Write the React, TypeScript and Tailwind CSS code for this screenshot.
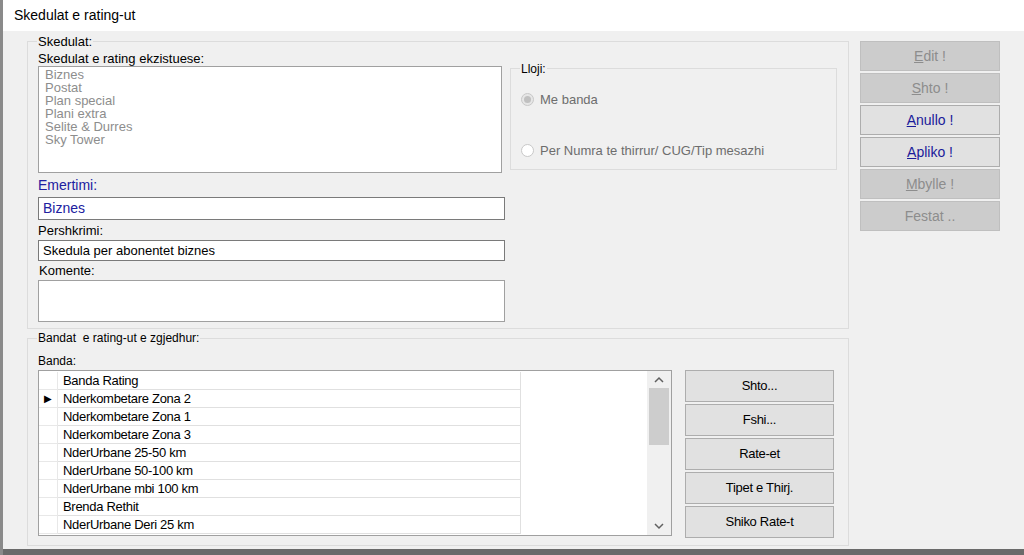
import { FC } from "react";

const schedules = ["Biznes", "Postat", "Plan special", "Plani extra", "Selite & Durres", "Sky Tower"];
const bands = [
    "Nderkombetare Zona 2",
    "Nderkombetare Zona 1",
    "Nderkombetare Zona 3",
    "NderUrbane 25-50 km",
    "NderUrbane 50-100 km",
    "NderUrbane mbi 100 km",
    "Brenda Rethit",
    "NderUrbane Deri 25 km",
];

// top right action buttons: [first letter, rest, enabled]
const actions: [string, string, boolean][] = [
    ["E", "dit !", false],
    ["S", "hto !", false],
    ["A", "nullo !", true],
    ["A", "pliko !", true],
    ["M", "bylle !", false],
    ["", "Festat ..", false],
];

const ActionBtn: FC<{ u: string; rest: string; on: boolean }> = ({ u, rest, on }) => (
    <div
        className={`h-[30px] flex items-center justify-center text-[14px] border ${
            on ? "bg-[#e1e1e1] border-[#adadad] text-[#1a1a9a]" : "bg-[#cccccc] border-[#bfbfbf] text-[#8d8d8d]"
        }`}
    >
        <span className="underline">{u}</span>
        {rest}
    </div>
);

const App: FC = () => {
    return (
        <div
            className="w-[1024px] h-[555px] bg-white border-l-[3px] border-[#8a8a8a] flex flex-col text-[13px] text-black overflow-hidden"
            style={{ fontFamily: '"Liberation Sans", Arial, sans-serif' }}
        >
            {/* title bar */}
            <div className="h-[31px] flex items-center pl-[11px] text-[14px] bg-white shrink-0">Skedulat e rating-ut</div>

            <div className="flex-1 bg-[#f0f0f0] flex pl-[24px] pt-[10px] border-b-[6px] border-[#6a6a6a]">
                <div className="w-[822px] flex flex-col">
                    {/* group 1 */}
                    <div className="relative h-[288px] border border-[#dcdcdc] pl-[10px] pr-[10px]">
                        <span className="absolute -top-[8px] left-[9px] bg-[#f0f0f0] px-[1px] leading-[15px]">Skedulat:</span>
                        <div className="pt-[9px] leading-[15px]">Skedulat e rating ekzistuese:</div>
                        <div className="flex gap-[8px]">
                            <div className="w-[464px] h-[107px] bg-white border border-[#a0a0a0] px-[6px] py-[1px] text-[#8d8d8d] leading-[13px]">
                                {schedules.map((s) => (
                                    <div key={s}>{s}</div>
                                ))}
                            </div>
                            <div className="relative mt-[2px] w-[327px] h-[102px] border border-[#dcdcdc]">
                                <span className="absolute -top-[7px] left-[9px] bg-[#f0f0f0] px-[1px] text-[12px] leading-[14px]">Lloji:</span>
                                <div className="flex items-center gap-[6px] pl-[10px] pt-[21px] text-[#6d6d6d]">
                                    <span className="w-[13px] h-[13px] rounded-full border border-[#c8c8c8] bg-[#e6e6e6] flex items-center justify-center">
                                        <span className="w-[7px] h-[7px] rounded-full bg-[#c0c0c0]" />
                                    </span>
                                    Me banda
                                </div>
                                <div className="flex items-center gap-[6px] pl-[10px] pt-[31px] text-[#6d6d6d]">
                                    <span className="w-[13px] h-[13px] rounded-full border border-[#c8c8c8] bg-white" />
                                    Per Numra te thirrur/ CUG/Tip mesazhi
                                </div>
                            </div>
                        </div>
                        <div className="mt-[3px] text-[#2020a0] text-[14px] leading-[18px]">Emertimi:</div>
                        <div className="mt-[3px] w-[467px] h-[23px] bg-white border border-[#7a7a7a] px-[4px] text-[#2020a0] text-[14px] leading-[21px]">
                            Biznes
                        </div>
                        <div className="mt-[3px] leading-[15px]">Pershkrimi:</div>
                        <div className="mt-[2px] w-[467px] h-[21px] bg-white border border-[#7a7a7a] px-[4px] leading-[19px]">
                            Skedula per abonentet biznes
                        </div>
                        <div className="mt-[2px] pl-[1px] leading-[15px]">Komente:</div>
                        <div className="mt-[2px] w-[467px] h-[42px] bg-white border border-[#a0a0a0]" />
                    </div>

                    {/* group 2 */}
                    <div className="relative mt-[9px] h-[208px] border border-[#dcdcdc] pl-[10px]">
                        <span className="absolute -top-[8px] left-[9px] bg-[#f0f0f0] px-[1px] text-[12px] leading-[15px]">
                            Bandat&nbsp; e rating-ut e zgjedhur:
                        </span>
                        <div className="pt-[15px] text-[12px] leading-[14px]">Banda:</div>
                        <div className="flex gap-[13px] mt-[2px]">
                            <div className="w-[634px] h-[166px] bg-white border border-[#a0a0a0] flex text-[13px] tracking-[-0.3px]">
                                <div className="flex-1 pt-[1px]">
                                    {["Banda Rating", ...bands].map((b, i) => (
                                        <div key={b} className="flex h-[18px]">
                                            <div className="w-[19px] border-r border-b border-[#e8e8e8] flex items-center justify-center text-[10px]">
                                                {i === 1 ? "▶" : ""}
                                            </div>
                                            <div className="w-[463px] border-r border-b border-[#e0e0e0] pl-[5px] leading-[17px]">{b}</div>
                                        </div>
                                    ))}
                                </div>
                                <div className="w-[24px] flex flex-col items-center bg-[#f0f0f0]">
                                    <svg width="10" height="17" viewBox="0 0 10 17" className="shrink-0">
                                        <path d="M1 11 L5 7 L9 11" fill="none" stroke="#606060" strokeWidth="1.5" />
                                    </svg>
                                    <div className="w-[20px] h-[57px] bg-[#cdcdcd]" />
                                    <div className="flex-1" />
                                    <svg width="10" height="17" viewBox="0 0 10 17" className="shrink-0">
                                        <path d="M1 6 L5 10 L9 6" fill="none" stroke="#606060" strokeWidth="1.5" />
                                    </svg>
                                </div>
                            </div>
                            <div className="w-[149px] flex flex-col gap-[2px] text-[13px] tracking-[-0.3px]">
                                {["Shto...", "Fshi...", "Rate-et", "Tipet e Thirj.", "Shiko Rate-t"].map((t) => (
                                    <div key={t} className="h-[32px] bg-[#e1e1e1] border border-[#adadad] flex items-center justify-center">
                                        {t}
                                    </div>
                                ))}
                            </div>
                        </div>
                    </div>
                </div>

                {/* right action column */}
                <div className="ml-[11px] w-[140px] flex flex-col gap-[2px]">
                    {actions.map(([u, r, on], i) => (
                        <ActionBtn key={i} u={u} rest={r} on={on} />
                    ))}
                </div>
            </div>
        </div>
    );
};

export default App;
